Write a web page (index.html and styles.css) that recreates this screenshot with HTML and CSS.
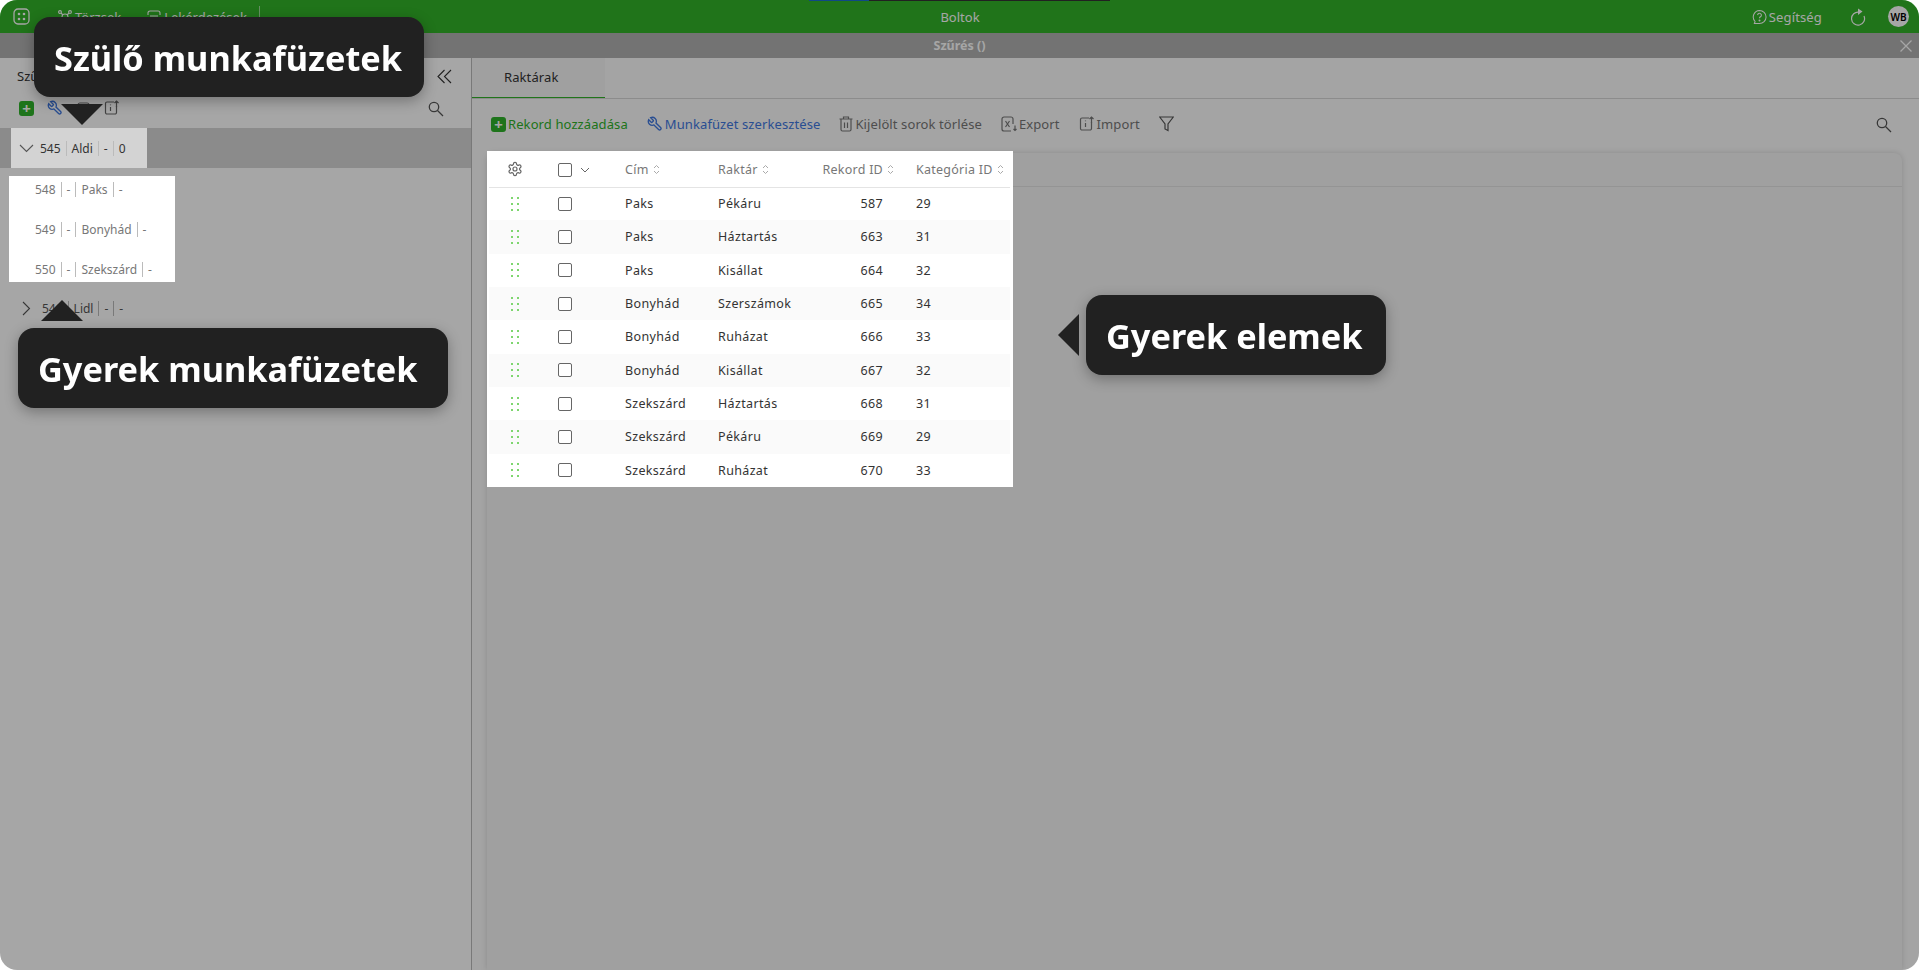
FILE: index.html
```html
<!DOCTYPE html>
<html lang="hu">
<head>
  <meta charset="UTF-8">
  <meta name="viewport" content="width=device-width, initial-scale=1.0">
  <title>Boltok</title>
  <link rel="stylesheet" href="styles.css">
</head>
<body>
  <div class="app">
    <header class="topbar">
      <div class="progress"></div>
      <div class="topbar-left">
        <svg class="icon-grid" width="17" height="17" viewBox="0 0 17 17" fill="none" stroke="currentColor" stroke-width="1.3"><rect x="1" y="1" width="15" height="15" rx="4"/><circle cx="6" cy="6" r="1.3" fill="currentColor" stroke="none"/><circle cx="11" cy="6" r="1.3" fill="currentColor" stroke="none"/><circle cx="6" cy="11" r="1.3" fill="currentColor" stroke="none"/><circle cx="11" cy="11" r="1.3" fill="currentColor" stroke="none"/></svg>
        <span class="nav-item nav-first">
          <svg width="14" height="14" viewBox="0 0 14 14" fill="none" stroke="currentColor" stroke-width="1.1"><circle cx="2" cy="2" r="1.400"/><circle cx="12" cy="2" r="1.400"/><circle cx="2" cy="12" r="1.400"/><circle cx="12" cy="12" r="1.400"/><circle cx="7" cy="7" r="3"/><path d="m3 3 2 2M11 3 9 5M3 11l2-2M11 11 9 9"/></svg>
          Törzsek
        </span>
        <span class="nav-item">
          <svg width="14" height="14" viewBox="0 0 14 14" fill="none" stroke="currentColor" stroke-width="1.1"><path d="M1 5V3a2 2 0 0 1 2-2h8a2 2 0 0 1 2 2v2M1 9v2a2 2 0 0 0 2 2h8a2 2 0 0 0 2-2V9M3 6h8"/></svg>
          Lekérdezések
        </span>
        <span class="nav-divider"></span>
      </div>
      <div class="topbar-title">Boltok</div>
      <div class="topbar-right">
        <span class="help">
          <svg width="15" height="16" viewBox="0 0 16 16" fill="none" stroke="currentColor" stroke-width="1.1"><path d="M8 1a7 7 0 0 1 0 14H2.500l.8-2.200A7 7 0 0 1 8 1z"/><path d="M6 6a2 2 0 1 1 3 1.800c-.7.4-1 .8-1 1.600"/><circle cx="8" cy="11.800" r=".5" fill="currentColor"/></svg>
          Segítség
        </span>
        <svg class="refresh" width="17" height="18" viewBox="0 0 17 18" fill="none" stroke="currentColor" stroke-width="1.200"><path d="M10 4.200A6.500 6.500 0 1 0 15 8"/><path d="M9 .5v6.500l4.500-3.500z" fill="currentColor" stroke="none"/></svg>
        <span class="avatar">WB</span>
      </div>
    </header>
    <div class="filterbar">
      <span>Szűrés ()</span>
      <svg class="filter-close" width="12" height="12" viewBox="0 0 12 12" stroke="currentColor" stroke-width="1.300"><path d="M.5.500l11 11M11.500.500l-11 11"/></svg>
    </div>

    <main class="content">
      <aside class="sidebar">
        <div class="side-head">
          <span>Szűrők</span>
          <svg width="15" height="15" viewBox="0 0 15 15" fill="none" stroke="#333" stroke-width="1.100"><path d="M7.500 1 1 7.500 7.500 14M14 1 7.500 7.500 14 14"/></svg>
        </div>
        <div class="side-tools">
          <span class="add-btn">+</span>
          <svg class="wrench" width="16" height="16" viewBox="0 0 24 24" fill="none" stroke="#3f78e0" stroke-width="2"><path d="M14.700 6.300a1 1 0 0 0 0 1.400l1.600 1.600a1 1 0 0 0 1.400 0l3.770-3.770a6 6 0 0 1-7.940 7.940l-6.910 6.910a2.120 2.120 0 0 1-3-3l6.910-6.910a6 6 0 0 1 7.940-7.940l-3.760 3.760z"/></svg>
          <svg width="15" height="15" viewBox="0 0 15 15" fill="none" stroke="#666" stroke-width="1.200"><rect x="2" y="2" width="11" height="12" rx="2"/></svg>
          <svg width="16" height="16" viewBox="0 0 16 16" fill="none" stroke="#666" stroke-width="1.200"><path d="M10 2H3a1.500 1.500 0 0 0-1.500 1.500v9A1.500 1.500 0 0 0 3 14h8a1.500 1.500 0 0 0 1.500-1.500V6"/><path d="M6.500 7v4M6.500 4.500v.8"/><path d="M12.500 7V1M10.500 3l2-2 2 2"/></svg>
          <svg class="push-right" width="17" height="17" viewBox="0 0 17 17" fill="none" stroke="#555" stroke-width="1.300"><circle cx="7" cy="7" r="4.700"/><path d="m10.500 10.500 5.500 5.500"/></svg>
        </div>
        <div class="tree-band">
          <div class="tree-parent spot">
            <svg width="15" height="9" viewBox="0 0 15 9" fill="none" stroke="#555" stroke-width="1.100"><path d="m1 1 6.500 6.500L14 1"/></svg>
            <span class="cells"><span>545</span><span>Aldi</span><span>-</span><span>0</span></span>
          </div>
        </div>
        <div class="tree-children spot">
          <div class="tree-child"><span>548</span><span>-</span><span>Paks</span><span>-</span></div>
          <div class="tree-child"><span>549</span><span>-</span><span>Bonyhád</span><span>-</span></div>
          <div class="tree-child"><span>550</span><span>-</span><span>Szekszárd</span><span>-</span></div>
        </div>
        <div class="tree-closed">
          <svg width="9" height="15" viewBox="0 0 9 15" fill="none" stroke="#555" stroke-width="1.100"><path d="m1 1 6.500 6.500L1 14"/></svg>
          <span class="cells"><span>546</span><span>Lidl</span><span>-</span><span>-</span></span>
        </div>
      </aside>

      <section class="main-panel">
        <div class="tabs"><div class="tab">Raktárak</div></div>
        <div class="toolbar">
          <span class="tool tool-green"><span class="add-btn">+</span>Rekord hozzáadása</span>
          <span class="tool tool-blue">
            <svg class="wrench" width="16" height="16" viewBox="0 0 24 24" fill="none" stroke="currentColor" stroke-width="2"><path d="M14.700 6.300a1 1 0 0 0 0 1.400l1.600 1.600a1 1 0 0 0 1.400 0l3.770-3.770a6 6 0 0 1-7.940 7.940l-6.910 6.910a2.120 2.120 0 0 1-3-3l6.910-6.910a6 6 0 0 1 7.940-7.940l-3.760 3.760z"/></svg>
            Munkafüzet szerkesztése
          </span>
          <span class="tool">
            <svg width="14" height="16" viewBox="0 0 14 16" fill="none" stroke="currentColor" stroke-width="1.200"><path d="M.5 3h13M4.500 3V1h5v2M2 3v10.500A1.500 1.500 0 0 0 3.500 15h7a1.500 1.500 0 0 0 1.500-1.500V3M5.500 6.500v5.500M8.500 6.500v5.500"/></svg>
            Kijelölt sorok törlése
          </span>
          <span class="tool">
            <svg width="16" height="16" viewBox="0 0 16 16" fill="none" stroke="currentColor" stroke-width="1.200"><path d="M12 8V3a2 2 0 0 0-2-2H3a2 2 0 0 0-2 2v10a2 2 0 0 0 2 2h7"/><path d="m4.500 5 4 6M8.500 5l-4 6M14 9.500v5M12.500 13l1.500 1.500 1.500-1.500"/></svg>
            Export
          </span>
          <span class="tool">
            <svg width="16" height="16" viewBox="0 0 16 16" fill="none" stroke="currentColor" stroke-width="1.200"><path d="M10 2H3a1.500 1.500 0 0 0-1.500 1.500v9A1.500 1.500 0 0 0 3 14h8a1.500 1.500 0 0 0 1.500-1.500V6"/><path d="M6.500 7v4M6.500 4.500v.8"/><path d="M12.500 7V1M10.500 3l2-2 2 2"/></svg>
            Import
          </span>
          <svg class="tool-filter" width="15" height="16" viewBox="0 0 15 16" fill="none" stroke="#555" stroke-width="1.200"><path d="M.7 1h13.600L9 8v6.500L6 13V8z"/></svg>
          <svg class="push-right" width="17" height="17" viewBox="0 0 17 17" fill="none" stroke="#555" stroke-width="1.300"><circle cx="7" cy="7" r="4.700"/><path d="m10.500 10.500 5.500 5.500"/></svg>
        </div>

        <div class="card">
          <div class="table-wrap spot">
            <table class="grid">
              <thead>
                <tr>
                  <th class="col-drag"><svg width="16" height="16" viewBox="0 0 24 24" fill="none" stroke="#666" stroke-width="1.800"><path d="M12.220 2h-.44a2 2 0 0 0-2 2v.18a2 2 0 0 1-1 1.730l-.43.25a2 2 0 0 1-2 0l-.15-.08a2 2 0 0 0-2.730.73l-.22.38a2 2 0 0 0 .73 2.730l.15.1a2 2 0 0 1 1 1.720v.51a2 2 0 0 1-1 1.740l-.15.09a2 2 0 0 0-.73 2.730l.22.38a2 2 0 0 0 2.730.73l.15-.08a2 2 0 0 1 2 0l.43.25a2 2 0 0 1 1 1.730V20a2 2 0 0 0 2 2h.44a2 2 0 0 0 2-2v-.18a2 2 0 0 1 1-1.730l.43-.25a2 2 0 0 1 2 0l.15.08a2 2 0 0 0 2.730-.73l.22-.39a2 2 0 0 0-.73-2.730l-.15-.08a2 2 0 0 1-1-1.740v-.5a2 2 0 0 1 1-1.740l.15-.09a2 2 0 0 0 .73-2.730l-.22-.38a2 2 0 0 0-2.730-.73l-.15.08a2 2 0 0 1-2 0l-.43-.25a2 2 0 0 1-1-1.730V4a2 2 0 0 0-2-2z"/><circle cx="12" cy="12" r="3"/></svg></th>
                  <th class="col-check"><span class="check"></span><svg class="check-caret" width="10" height="6" viewBox="0 0 10 6" fill="none" stroke="#666" stroke-width="1"><path d="m1 1 4 4 4-4"/></svg></th>
                  <th class="col-title">Cím<svg class="sort" width="7" height="11" viewBox="0 0 7 11" fill="none" stroke="#aaa"><path d="m1 4 2.500-2.500L6 4M1 7l2.500 2.500L6 7"/></svg></th>
                  <th class="col-store">Raktár<svg class="sort" width="7" height="11" viewBox="0 0 7 11" fill="none" stroke="#aaa"><path d="m1 4 2.500-2.500L6 4M1 7l2.500 2.500L6 7"/></svg></th>
                  <th class="col-id">Rekord ID<svg class="sort sort-out" width="7" height="11" viewBox="0 0 7 11" fill="none" stroke="#aaa"><path d="m1 4 2.500-2.500L6 4M1 7l2.500 2.500L6 7"/></svg></th>
                  <th class="col-cat">Kategória ID<svg class="sort" width="7" height="11" viewBox="0 0 7 11" fill="none" stroke="#aaa"><path d="m1 4 2.500-2.500L6 4M1 7l2.500 2.500L6 7"/></svg></th>
                </tr>
              </thead>
              <tbody id="rows"></tbody>
            </table>
          </div>
        </div>
      </section>
    </main>
  </div>

  <div class="overlay"></div>

  <div class="callout callout-parent">Szülő munkafüzetek<span class="arrow arrow-down"></span></div>
  <div class="callout callout-child">Gyerek munkafüzetek<span class="arrow arrow-up"></span></div>
  <div class="callout callout-items">Gyerek elemek<span class="arrow arrow-left"></span></div>

  <script>
    const rows = [
      ['Paks', 'Pékáru', 587, 29],
      ['Paks', 'Háztartás', 663, 31],
      ['Paks', 'Kisállat', 664, 32],
      ['Bonyhád', 'Szerszámok', 665, 34],
      ['Bonyhád', 'Ruházat', 666, 33],
      ['Bonyhád', 'Kisállat', 667, 32],
      ['Szekszárd', 'Háztartás', 668, 31],
      ['Szekszárd', 'Pékáru', 669, 29],
      ['Szekszárd', 'Ruházat', 670, 33]
    ];

    const dots = '<svg width="8" height="14" viewBox="0 0 8 14" fill="#7ed66f"><rect x="0" y="0" width="2" height="2"/><rect x="6" y="0" width="2" height="2"/><rect x="0" y="6" width="2" height="2"/><rect x="6" y="6" width="2" height="2"/><rect x="0" y="12" width="2" height="2"/><rect x="6" y="12" width="2" height="2"/></svg>';

    // Fill the table body
    document.getElementById('rows').innerHTML = rows.map(r => `
      <tr>
        <td class="col-drag">${dots}</td>
        <td class="col-check"><span class="check"></span></td>
        <td class="col-title">${r[0]}</td>
        <td class="col-store">${r[1]}</td>
        <td class="col-id">${r[2]}</td>
        <td class="col-cat">${r[3]}</td>
      </tr>`).join('');
  </script>
</body>
</html>
```

FILE: styles.css
```css
/* General Layout */
* {
  box-sizing: border-box;
}

html,
body {
  height: 100%;
  margin: 0;
  background: #fff;
  overflow: hidden;
}

body {
  font-family: "Noto Sans", "Open Sans", sans-serif;
  font-size: 12.5px;
  color: #333;
}

.app {
  height: 970px;
  display: flex;
  flex-direction: column;
  border-radius: 17px;
  overflow: hidden;
  background: #fff;
}

/* Top bar */
.topbar {
  height: 33px;
  flex: none;
  position: relative;
  display: grid;
  grid-template-columns: 1fr auto 1fr;
  align-items: center;
  background: #32b329;
  color: #fff;
  padding: 0 10px 0 13px;
}

.progress {
  position: absolute;
  left: 809px;
  top: 0;
  width: 301px;
  height: 1px;
  background: linear-gradient(to right, #1a6fd0 60px, #333 60px);
}

.topbar-left {
  display: flex;
  align-items: center;
  gap: 16px;
}

.nav-item {
  display: flex;
  align-items: center;
  gap: 3px;
  font-size: 13px;
}

.nav-first {
  margin-left: 12px;
  margin-right: 10px;
}

.nav-divider {
  width: 1px;
  height: 22px;
  margin-left: -4px;
  background: #9fdc9a;
}

.topbar-title {
  font-size: 13px;
  margin-right: 2px;
}

.topbar-right {
  display: flex;
  align-items: center;
  justify-content: flex-end;
  gap: 22px;
}

.help {
  display: flex;
  align-items: center;
  gap: 2px;
  font-size: 13px;
  letter-spacing: 0.15px;
  margin-right: 5px;
}

.avatar {
  width: 21px;
  height: 21px;
  border-radius: 50%;
  background: #fff;
  color: #000;
  font-size: 10px;
  font-weight: 600;
  display: flex;
  align-items: center;
  justify-content: center;
}

.filterbar {
  height: 25px;
  flex: none;
  background: #b1b1b1;
  color: #fff;
  font-weight: 700;
  font-size: 12.5px;
  position: relative;
  display: flex;
  align-items: center;
  justify-content: center;
}

.filter-close {
  position: absolute;
  right: 7px;
  top: 7px;
}

.content {
  flex: 1;
  display: flex;
  min-height: 0;
}

/* Sidebar */
.sidebar {
  width: 472px;
  flex: none;
  background: #fff;
  border-right: 1px solid #bbb;
}

.side-head {
  height: 36px;
  display: flex;
  align-items: center;
  justify-content: space-between;
  padding: 0 19px 0 17px;
  font-size: 13px;
}

.side-tools {
  height: 34px;
  display: flex;
  align-items: center;
  gap: 13px;
  padding: 0 27px 6px 19px;
}

.push-right {
  margin-left: auto;
}

.wrench {
  transform: scaleX(-1);
  flex: none;
}

.add-btn {
  width: 15px;
  height: 15px;
  border-radius: 3px;
  background: #2fb32a;
  color: #fff;
  font-size: 15px;
  font-weight: 700;
  line-height: 14px;
  text-align: center;
  flex: none;
}

.tree-band {
  height: 40px;
  background: #d6d6d6;
}

.tree-parent {
  width: 136px;
  height: 40px;
  margin-left: 11px;
  padding-left: 8px;
  display: flex;
  align-items: center;
  gap: 6px;
  background: #d3d3d3;
}

.cells {
  display: flex;
  font-size: 12px;
}

.cells span,
.tree-child span {
  padding: 0 5px;
  border-left: 1px solid #bbb;
  line-height: 15px;
}

.cells span:first-child,
.tree-child span:first-child {
  padding-left: 0;
  border-left: none;
}

.tree-children {
  width: 166px;
  height: 106px;
  margin: 8px 0 0 9px;
  background: #fff;
  display: flex;
  flex-direction: column;
  gap: 14px;
}

.tree-child {
  height: 26px;
  padding-left: 26px;
  display: flex;
  align-items: center;
  font-size: 12px;
  color: #777;
}

.tree-closed {
  height: 30px;
  margin-top: 11px;
  padding-left: 22px;
  display: flex;
  align-items: center;
  gap: 11px;
  color: #555;
}

/* Main panel */
.main-panel {
  flex: 1;
  min-width: 0;
  display: flex;
  flex-direction: column;
  background: #fcfcfc;
}

.tabs {
  height: 41px;
  flex: none;
  border-bottom: 1px solid #d8d8d8;
}

.tab {
  width: 133px;
  height: 40px;
  background: #f6f6f6;
  border-bottom: 1px solid #32b329;
  padding-left: 32px;
  line-height: 38px;
  font-size: 13px;
  letter-spacing: 0.1px;
  color: #333;
}

.toolbar {
  height: 50px;
  flex: none;
  display: flex;
  align-items: center;
  gap: 19px;
  padding: 0 27px 0 19px;
}

.tool {
  display: flex;
  align-items: center;
  gap: 2px;
  font-size: 13px;
  letter-spacing: 0.1px;
  color: #777;
}

.tool-green {
  color: #2fb32a;
}

.tool-blue {
  color: #3f78e0;
}

.tool-filter {
  flex: none;
}

.card {
  flex: 1;
  margin: 4px 17px 0 15px;
  background: linear-gradient(#e4e4e4, #e4e4e4) 0 33px / 100% 1px no-repeat #f6f6f6;
  border-radius: 8px 8px 0 0;
  box-shadow: 0 0 6px rgba(0, 0, 0, 0.15);
}

/* Highlighted table */
.table-wrap {
  width: 526px;
  margin-top: -2px;
  position: relative;
  background: #fff;
  padding: 1px 3px 0 2px;
}

.grid {
  width: 100%;
  border-collapse: collapse;
  table-layout: fixed;
  font-size: 12.5px;
  letter-spacing: 0.35px;
}

.grid th {
  height: 35px;
  padding: 0;
  font-weight: 400;
  letter-spacing: 0.25px;
  color: #777;
  text-align: left;
  border-bottom: 1px solid #e4e4e4;
  white-space: nowrap;
}

.grid td {
  height: 33.33px;
  padding: 0;
  color: #333;
}

.grid tbody tr:nth-child(even) td {
  background: #fafafa;
}

.grid .col-drag {
  width: 52px;
  text-align: center;
}

.col-drag svg {
  display: block;
  margin: 0 auto;
}

.grid .col-check {
  width: 84px;
  padding-left: 17px;
}

.col-title {
  width: 93px;
}

.col-store {
  width: 95px;
}

.grid .col-id {
  width: 70px;
  text-align: right;
}

.grid .col-cat {
  padding-left: 33px;
}

.check {
  display: inline-block;
  width: 14px;
  height: 14px;
  border: 1px solid #666;
  border-radius: 2px;
  background: #fff;
  vertical-align: middle;
}

td .check {
  display: block;
}

.check-caret {
  margin-left: 8px;
  vertical-align: middle;
}

.sort {
  margin-left: 4px;
  vertical-align: -1px;
}

.sort-out {
  margin-right: -11px;
}

/* Tour overlay */
.overlay {
  position: fixed;
  inset: 0;
  background: rgba(0, 0, 0, 0.35);
  border-radius: 17px;
  z-index: 1;
}

.spot {
  z-index: 2;
  position: relative;
}

.callout {
  position: absolute;
  z-index: 3;
  height: 80px;
  padding: 0 20px;
  display: flex;
  align-items: center;
  background: #212121;
  color: #fff;
  font-size: 34.3px;
  font-weight: 700;
  border-radius: 16px;
  white-space: nowrap;
  box-shadow: 0 4px 14px rgba(0, 0, 0, 0.3);
}

.callout-parent {
  left: 34px;
  top: 17px;
  width: 390px;
}

.callout-child {
  left: 18px;
  top: 328px;
  width: 430px;
}

.callout-items {
  left: 1086px;
  top: 295px;
  width: 300px;
}

.arrow {
  position: absolute;
  width: 0;
  height: 0;
  border-style: solid;
  border-color: transparent;
}

.arrow-down {
  left: 27px;
  top: 87px;
  border-width: 21px 21px 0;
  border-top-color: #212121;
}

.arrow-up {
  left: 23px;
  top: -28px;
  border-width: 0 21px 21px;
  border-bottom-color: #212121;
}

.arrow-left {
  left: -28px;
  top: 19px;
  border-width: 21px 21px 21px 0;
  border-right-color: #212121;
}
```
